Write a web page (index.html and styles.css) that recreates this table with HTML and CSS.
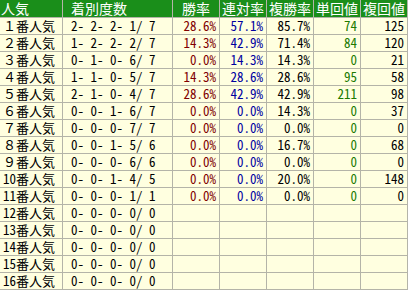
FILE: index.html
```html
<!DOCTYPE html>
<html lang="ja">
<head>
<meta charset="utf-8">
<link rel="stylesheet" href="styles.css">
</head>
<body>
<div class="grid">
  <div class="h h-pop">人気</div><div class="h h-rec">着別度数</div><div class="h">勝率</div><div class="h">連対率</div><div class="h">複勝率</div><div class="h">単回値</div><div class="h">複回値</div>

  <div class="c pop">１番人気</div><div class="c rec">2- 2- 2- 1/ 7</div><div class="c win">28.6%</div><div class="c ren">57.1%</div><div class="c fuk">85.7%</div><div class="c tan">74</div><div class="c fkv">125</div>
  <div class="c pop">２番人気</div><div class="c rec">1- 2- 2- 2/ 7</div><div class="c win">14.3%</div><div class="c ren">42.9%</div><div class="c fuk">71.4%</div><div class="c tan">84</div><div class="c fkv">120</div>
  <div class="c pop">３番人気</div><div class="c rec">0- 1- 0- 6/ 7</div><div class="c win">0.0%</div><div class="c ren">14.3%</div><div class="c fuk">14.3%</div><div class="c tan">0</div><div class="c fkv">21</div>
  <div class="c pop">４番人気</div><div class="c rec">1- 1- 0- 5/ 7</div><div class="c win">14.3%</div><div class="c ren">28.6%</div><div class="c fuk">28.6%</div><div class="c tan">95</div><div class="c fkv">58</div>
  <div class="c pop">５番人気</div><div class="c rec">2- 1- 0- 4/ 7</div><div class="c win">28.6%</div><div class="c ren">42.9%</div><div class="c fuk">42.9%</div><div class="c tan">211</div><div class="c fkv">98</div>
  <div class="c pop">６番人気</div><div class="c rec">0- 0- 1- 6/ 7</div><div class="c win">0.0%</div><div class="c ren">0.0%</div><div class="c fuk">14.3%</div><div class="c tan">0</div><div class="c fkv">37</div>
  <div class="c pop">７番人気</div><div class="c rec">0- 0- 0- 7/ 7</div><div class="c win">0.0%</div><div class="c ren">0.0%</div><div class="c fuk">0.0%</div><div class="c tan">0</div><div class="c fkv">0</div>
  <div class="c pop">８番人気</div><div class="c rec">0- 0- 1- 5/ 6</div><div class="c win">0.0%</div><div class="c ren">0.0%</div><div class="c fuk">16.7%</div><div class="c tan">0</div><div class="c fkv">68</div>
  <div class="c pop">９番人気</div><div class="c rec">0- 0- 0- 6/ 6</div><div class="c win">0.0%</div><div class="c ren">0.0%</div><div class="c fuk">0.0%</div><div class="c tan">0</div><div class="c fkv">0</div>
  <div class="c pop">10番人気</div><div class="c rec">0- 0- 1- 4/ 5</div><div class="c win">0.0%</div><div class="c ren">0.0%</div><div class="c fuk">20.0%</div><div class="c tan">0</div><div class="c fkv">148</div>
  <div class="c pop">11番人気</div><div class="c rec">0- 0- 0- 1/ 1</div><div class="c win">0.0%</div><div class="c ren">0.0%</div><div class="c fuk">0.0%</div><div class="c tan">0</div><div class="c fkv">0</div>
  <div class="c pop">12番人気</div><div class="c rec">0- 0- 0- 0/ 0</div><div class="c"></div><div class="c"></div><div class="c"></div><div class="c"></div><div class="c"></div>
  <div class="c pop">13番人気</div><div class="c rec">0- 0- 0- 0/ 0</div><div class="c"></div><div class="c"></div><div class="c"></div><div class="c"></div><div class="c"></div>
  <div class="c pop">14番人気</div><div class="c rec">0- 0- 0- 0/ 0</div><div class="c"></div><div class="c"></div><div class="c"></div><div class="c"></div><div class="c"></div>
  <div class="c pop">15番人気</div><div class="c rec">0- 0- 0- 0/ 0</div><div class="c"></div><div class="c"></div><div class="c"></div><div class="c"></div><div class="c"></div>
  <div class="c pop">16番人気</div><div class="c rec">0- 0- 0- 0/ 0</div><div class="c"></div><div class="c"></div><div class="c"></div><div class="c"></div><div class="c"></div>
</div>
</body>
</html>
```
FILE: styles.css
```css
html, body {
  margin: 0;
  padding: 0;
  background: #ffffff;
}
.grid {
  display: grid;
  grid-template-columns: 63px 110px repeat(5, 47px);
  grid-template-rows: 18px repeat(16, 17px);
  width: 408px;
  font-family: "Noto Sans Mono CJK JP", "Noto Sans CJK JP", monospace;
}
.h, .c {
  box-sizing: border-box;
  border-right: 1px solid #b4b4a8;
  border-bottom: 1px solid #b4b4a8;
  display: flex;
  align-items: center;
  white-space: pre;
}
.h {
  background: #1a8e1a;
  color: #ffffff;
  font-size: 14px;
  justify-content: center;
  line-height: 17px;
}
.h-pop {
  justify-content: flex-start;
  padding-left: 1px;
}
.h-rec {
  justify-content: flex-start;
  padding-left: 8px;
}
.c {
  background: #ffffe0;
  color: #000000;
  font-size: 13px;
  line-height: 16px;
  justify-content: flex-end;
  padding-right: 3px;
}
.pop {
  justify-content: flex-start;
  padding-left: 3px;
}
.rec {
  justify-content: flex-start;
  padding-left: 8px;
}
.win { color: #800000; }
.ren { color: #0000a0; }
.fuk { color: #000000; }
.tan { color: #207a00; }
.fkv { color: #000000; }
```
